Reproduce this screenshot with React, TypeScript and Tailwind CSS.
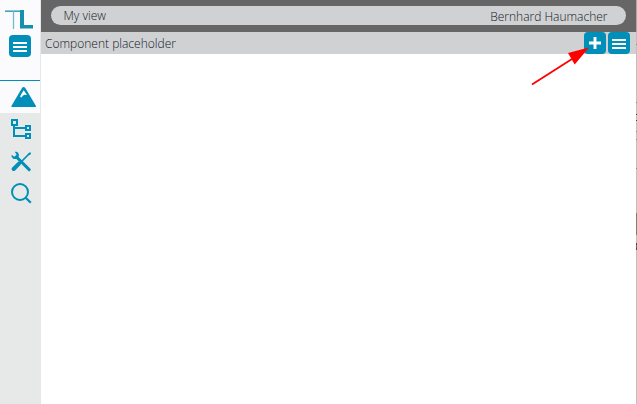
import React from "react";

function Bars({ className }: { className: string }) {
  return (
    <span className={`flex flex-col items-center gap-[2px] bg-[#008fb9] pt-[7px] ${className}`}>
      <span className="h-[2px] w-[14px] bg-white" />
      <span className="h-[2px] w-[14px] bg-white" />
      <span className="h-[2px] w-[14px] bg-white" />
    </span>
  );
}

function Logo() {
  return (
    <svg width="28" height="20" viewBox="0 0 28 20">
      <path d="M0 1.2H16" stroke="#319fb7" strokeWidth="1.5" />
      <path d="M8.5 1V19" stroke="#75b9ca" strokeWidth="1.3" />
      <path d="M15 0H19V15H28V18.5H15Z" fill="#158fad" />
    </svg>
  );
}

function Sidebar() {
  return (
    <aside className="flex w-[41px] shrink-0 flex-col border-r border-[#e5e8eb] bg-[#e7e9e8]">
      <div className="flex h-[81px] flex-col border-b border-[#008fb9] bg-[#fbfbfe] pt-[10px] pl-[5px]">
        <Logo />
        <button className="mt-[5px] ml-1 flex">
          <Bars className="size-[22px] rounded-[4px]" />
        </button>
      </div>
      <nav className="flex flex-col text-[#008fb9]">
        <button className="flex h-8 bg-[#fbfbfe] pt-[5px] pl-[11px]">
          <svg width="26" height="22" viewBox="0 0 26 22">
            <path d="M12.6 1Q13.6 1 14.3 2L25 20Q25.2 21 24.5 21H.8Q0 21 .4 20L11 2Q11.6 1 12.6 1Z" fill="currentColor" />
            <path d="M12.7 4.2L16 9L13.6 8.8L11.6 9.7L10.8 11.4L9 10.8L10.2 8.2Z" fill="white" />
          </svg>
        </button>
        <button className="flex h-8 pt-[6px] pl-[11px]">
          <svg width="21" height="21" viewBox="0 0 21 21" fill="none" stroke="currentColor" strokeWidth="2">
            <path d="M1 1H6V6H1ZM15 7H19V11H15ZM15 15H19V19H15ZM3 6V17H15M3 9H15" />
          </svg>
        </button>
        <button className="flex h-8 pt-[6px] pl-[11px]">
          <svg width="21" height="21" viewBox="0 0 21 21" fill="none" stroke="currentColor">
            <path d="M19 2L9 12" strokeWidth="1.7" />
            <path d="M8 12.6L2.7 18" strokeWidth="4" strokeLinecap="round" />
            <path d="M5.5 6L18.2 18.6" strokeWidth="3" strokeLinecap="round" />
            <path d="M3.8 .7C6.5 .3 8.5 2 7.8 5.6L5.1 8C2.3 8.5 .1 6.4 .6 3.7L3.3 5.7L5.6 3.7Z" fill="currentColor" stroke="none" />
            <path d="M17.4 2.2L20 1.3L19.4 3.7L18 4.2Z" fill="currentColor" stroke="none" />
          </svg>
        </button>
        <button className="flex h-8 pt-[6px] pl-[11px]">
          <svg width="21" height="21" viewBox="0 0 21 21" fill="none" stroke="currentColor" strokeWidth="2">
            <circle cx="9" cy="9" r="8" />
            <path d="M14.7 14.7L19.8 19.7" strokeWidth="2.3" />
          </svg>
        </button>
      </nav>
    </aside>
  );
}

export default function App() {
  return (
    <div className="relative flex h-[404px] w-[637px] overflow-hidden bg-white font-['Open_Sans',sans-serif] text-[12px] leading-4 font-light text-[#101828]">
      <Sidebar />
      <main className="flex min-w-0 flex-1 flex-col">
        <header className="h-8 bg-[#666666] px-[10px] pt-[6px]">
          <div className="flex h-[19px] items-center justify-between rounded-full bg-[#d0d1d3] pr-[18.5px] pl-[12.5px]">
            <span>My view</span>
            <span className="pt-[2px]">Bernhard Haumacher</span>
          </div>
        </header>
        <div className="flex h-[22px] items-center justify-between bg-[#d0d1d3] pr-[6px] pl-1">
          <span className="pt-px">Component placeholder</span>
          <div className="flex gap-[2px]">
            <button className="flex size-[22px] items-center justify-center rounded-[4px] bg-[#008fb9]">
              <svg width="12" height="12" viewBox="0 0 12 12">
                <path d="M6 0V12M0 6H12" stroke="white" strokeWidth="2.9" />
              </svg>
            </button>
            <button className="flex">
              <Bars className="size-[22px] rounded-[4px]" />
            </button>
          </div>
        </div>
      </main>
      <div className="flex w-px shrink-0 flex-col bg-[#bfbfbf]">
        <span className="h-8 bg-[#a9a9a9]" />
        <span className="mt-[12px] h-px bg-[#888888]" />
        <span className="mt-[57px] h-px bg-[#888888]" />
        <span className="mt-[11px] h-px bg-[#444444]" />
        <span className="mt-[5px] h-px bg-[#444444]" />
        <span className="mt-[10px] h-px bg-[#888888]" />
        <span className="mt-[7px] h-px bg-[#888888]" />
        <span className="mt-[28px] h-px bg-[#888888]" />
        <span className="mt-[44px] h-[22px] bg-[#768864]" />
        <span className="mt-[8px] h-[2px] bg-[#344b77]" />
        <span className="h-[3px] bg-[#98562d]" />
        <span className="h-[2px] bg-[#344b77]" />
      </div>
      <svg className="absolute top-[45px] left-[530px]" width="61" height="42" viewBox="0 0 61 42">
        <path d="M2 39.5L42 14" stroke="#ff0000" strokeWidth="1.8" />
        <path d="M59 2.5L38 8L44.7 19.5Z" fill="#ff0000" />
      </svg>
    </div>
  );
}
